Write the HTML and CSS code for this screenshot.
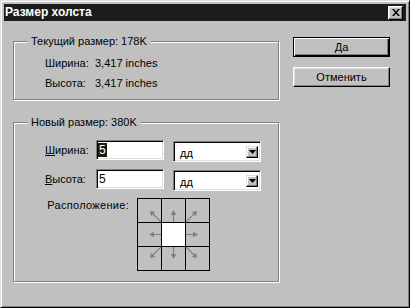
FILE: index.html
```html
<!DOCTYPE html>
<html lang="ru">
<head>
<meta charset="utf-8">
<title>Размер холста</title>
<link rel="stylesheet" href="styles.css">
</head>
<body>
<div class="window">
  <div class="titlebar">
    <span class="title">Размер холста</span>
    <div class="close">
      <svg width="8" height="7" viewBox="0 0 8 7"><path d="M0 0h2l2 2.5L6 0h2L5 3.5 8 7H6L4 4.5 2 7H0l3-3.5z" fill="#000"/></svg>
    </div>
  </div>
  <div class="content">
    <div class="main">
      <div class="group g1">
        <div class="legend">Текущий размер: 178K</div>
        <div class="info-rows">
          <div class="row"><span class="lbl">Ширина:</span><span>3,417 inches</span></div>
          <div class="row"><span class="lbl">Высота:</span><span>3,417 inches</span></div>
        </div>
      </div>
      <div class="group g2">
        <div class="legend">Новый размер: 380K</div>
        <div class="field-row first">
          <span class="flbl"><u>Ш</u>ирина:</span>
          <div class="input"><span class="sel">5</span></div>
          <div class="select"><span>дд</span><span class="drop"><svg width="7" height="4" viewBox="0 0 7 4"><path d="M0 0h7L3.5 4z" fill="#000"/></svg></span></div>
        </div>
        <div class="field-row">
          <span class="flbl"><u>В</u>ысота:</span>
          <div class="input"><span>5</span></div>
          <div class="select"><span>дд</span><span class="drop"><svg width="7" height="4" viewBox="0 0 7 4"><path d="M0 0h7L3.5 4z" fill="#000"/></svg></span></div>
        </div>
        <div class="loc">
          <span class="loc-lbl">Расположение:</span>
          <div class="anchor">
            <div class="cell"><svg viewBox="0 0 23 23"><path d="M23 23L15 15" stroke="#808080" stroke-width="1.2"/><path d="M12 12L17.2 13L13 17.2Z" fill="#808080"/></svg></div>
            <div class="cell"><svg viewBox="0 0 23 23"><path d="M11.5 23V15" stroke="#808080" stroke-width="1.2"/><path d="M11.5 11L8.7 16H14.3Z" fill="#808080"/></svg></div>
            <div class="cell"><svg class="r90" viewBox="0 0 23 23"><path d="M23 23L15 15" stroke="#808080" stroke-width="1.2"/><path d="M12 12L17.2 13L13 17.2Z" fill="#808080"/></svg></div>
            <div class="cell"><svg class="r270" viewBox="0 0 23 23"><path d="M11.5 23V15" stroke="#808080" stroke-width="1.2"/><path d="M11.5 11L8.7 16H14.3Z" fill="#808080"/></svg></div>
            <div class="cell center"></div>
            <div class="cell"><svg class="r90" viewBox="0 0 23 23"><path d="M11.5 23V15" stroke="#808080" stroke-width="1.2"/><path d="M11.5 11L8.7 16H14.3Z" fill="#808080"/></svg></div>
            <div class="cell"><svg class="r270" viewBox="0 0 23 23"><path d="M23 23L15 15" stroke="#808080" stroke-width="1.2"/><path d="M12 12L17.2 13L13 17.2Z" fill="#808080"/></svg></div>
            <div class="cell"><svg class="r180" viewBox="0 0 23 23"><path d="M11.5 23V15" stroke="#808080" stroke-width="1.2"/><path d="M11.5 11L8.7 16H14.3Z" fill="#808080"/></svg></div>
            <div class="cell"><svg class="r180" viewBox="0 0 23 23"><path d="M23 23L15 15" stroke="#808080" stroke-width="1.2"/><path d="M12 12L17.2 13L13 17.2Z" fill="#808080"/></svg></div>
          </div>
        </div>
      </div>
    </div>
    <div class="buttons">
      <div class="btn default">Да</div>
      <div class="btn">Отменить</div>
    </div>
  </div>
</div>
</body>
</html>
```
FILE: styles.css
```css
html, body {
  margin: 0;
  padding: 0;
}
body {
  width: 410px;
  height: 308px;
  font-family: "Liberation Sans", Arial, sans-serif;
  font-size: 11px;
  color: #000;
  background: #c0c0c0;
}
.window {
  box-sizing: border-box;
  width: 410px;
  height: 308px;
  background: #c0c0c0;
  border: 1px solid;
  border-color: #dfdfdf #000 #000 #dfdfdf;
  box-shadow: inset 1px 1px #fff, inset -1px -1px #808080;
  padding: 3px;
  display: flex;
  flex-direction: column;
}
.titlebar {
  height: 17px;
  background: #1c1c1c;
  display: flex;
  align-items: center;
  justify-content: space-between;
  padding: 0 3px 0 1px;
}
.title {
  color: #fff;
  font-weight: bold;
  font-size: 12px;
  line-height: 17px;
}
.close {
  box-sizing: border-box;
  width: 15px;
  height: 14px;
  background: #c0c0c0;
  border: 1px solid;
  border-color: #fff #000 #000 #fff;
  box-shadow: inset -1px -1px #808080, inset 1px 1px #dfdfdf;
  display: flex;
  align-items: center;
  justify-content: center;
}
.close svg { display: block; }
.content {
  display: flex;
  align-items: flex-start;
  gap: 14px;
  padding: 16px 0 0 9px;
}
.main {
  width: 266px;
  margin-top: 4px;
  display: flex;
  flex-direction: column;
  gap: 22px;
}
.group {
  box-sizing: border-box;
  width: 266px;
  border: 1px solid #808080;
  box-shadow: inset 1px 1px #fff, 1px 1px #fff;
}
.legend {
  width: fit-content;
  margin: -7px 0 0 13px;
  padding: 0 4px;
  line-height: 13px;
  background: #c0c0c0;
}
.g1 { padding-bottom: 6px; }
.info-rows { margin-top: 5px; }
.row {
  display: flex;
  align-items: center;
  height: 20px;
  padding-left: 31px;
}
.lbl { width: 50px; }
.g2 { padding-bottom: 10px; }
.field-row {
  display: flex;
  align-items: flex-start;
  padding-left: 31px;
  margin-top: 7px;
}
.field-row.first { margin-top: 11px; }
.flbl {
  width: 51px;
  line-height: 20px;
}
.input {
  box-sizing: border-box;
  width: 68px;
  height: 20px;
  background: #fff;
  border: 1px solid;
  border-color: #808080 #fff #fff #808080;
  box-shadow: inset 1px 1px #000, inset -1px -1px #dfdfdf;
  padding-left: 2px;
  line-height: 18px;
  font-size: 12px;
}
.sel {
  background: #1c1c1c;
  color: #fff;
  margin-left: -1px;
  padding: 0 1px;
}
.select {
  box-sizing: border-box;
  width: 88px;
  height: 21px;
  margin: 1px 0 0 9px;
  background: #fff;
  border: 1px solid;
  border-color: #808080 #fff #fff #808080;
  box-shadow: inset 1px 1px #000, inset -1px -1px #dfdfdf;
  display: flex;
  align-items: flex-end;
  justify-content: space-between;
  padding: 0 2px 1px 6px;
  line-height: 13px;
}
.drop {
  align-self: center;
  box-sizing: border-box;
  width: 12px;
  height: 12px;
  margin-top: 2px;
  background: #c0c0c0;
  border: 1px solid;
  border-color: #dfdfdf #000 #000 #dfdfdf;
  box-shadow: inset -1px -1px #808080, inset 1px 1px #fff;
  display: flex;
  align-items: center;
  justify-content: center;
}
.drop svg { display: block; }
.loc {
  display: flex;
  align-items: flex-start;
  margin-top: 7px;
}
.loc-lbl {
  box-sizing: border-box;
  width: 123px;
  padding-right: 8px;
  text-align: right;
  margin-top: 1px;
  line-height: 13px;
  letter-spacing: 0.3px;
}
.anchor {
  display: grid;
  grid-template-columns: repeat(3, 23px);
  grid-template-rows: repeat(3, 23px);
  gap: 1px;
  padding: 1px;
  background: #000;
}
.cell { background: #c0c0c0; }
.cell.center { background: #fff; }
.cell svg {
  display: block;
  width: 23px;
  height: 23px;
}
.r90 { transform: rotate(90deg); }
.r180 { transform: rotate(180deg); }
.r270 { transform: rotate(270deg); }
.buttons {
  display: flex;
  flex-direction: column;
  gap: 10px;
}
.btn {
  box-sizing: border-box;
  width: 97px;
  height: 20px;
  display: flex;
  align-items: center;
  justify-content: center;
  background: #c0c0c0;
  border: 1px solid;
  border-color: #fff #000 #000 #fff;
  box-shadow: inset -1px -1px #808080, inset 1px 1px #dfdfdf;
}
.btn.default {
  border-color: #000;
  box-shadow: inset 1px 1px #fff, inset -1px -1px #000, inset -2px -2px #808080;
}
```
